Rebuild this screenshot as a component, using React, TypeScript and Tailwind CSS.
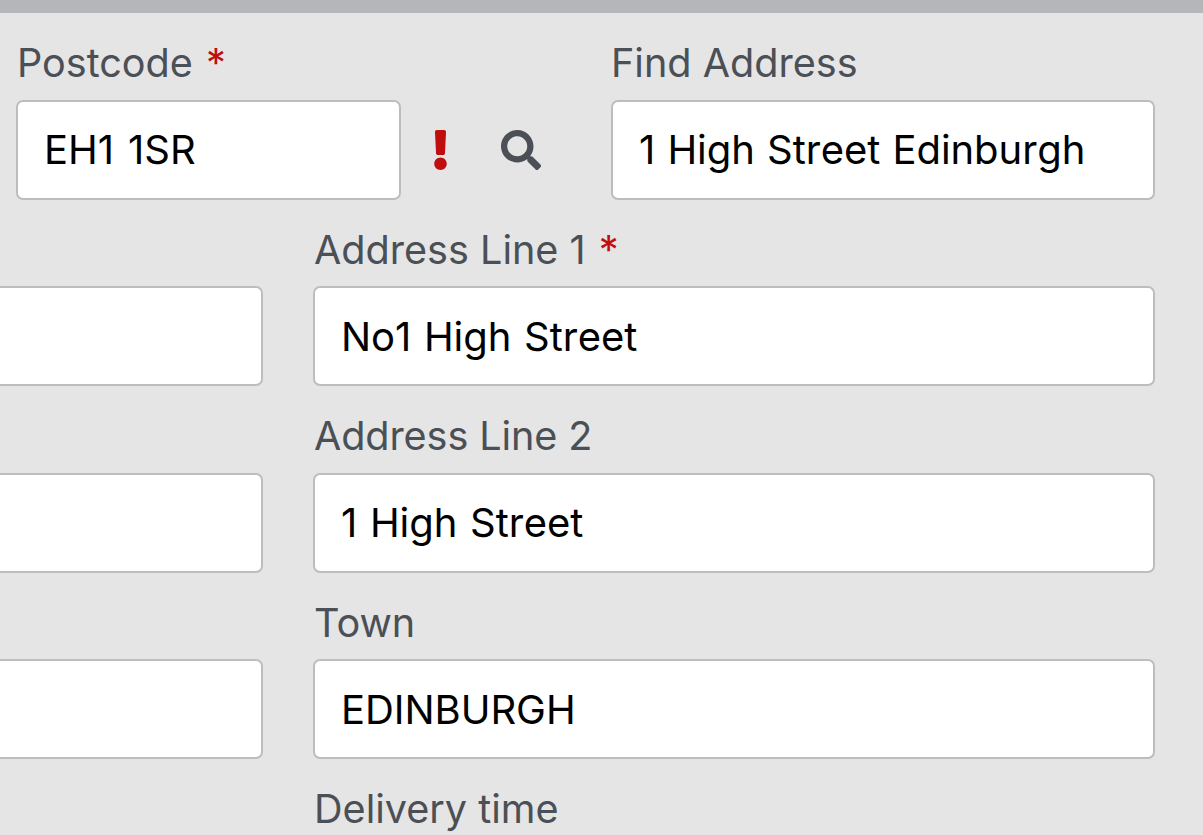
import React from "react";
import { FaExclamation, FaSearch } from "react-icons/fa";

function Star() {
  return <span className="text-[#c00d0d] ml-[13px]">*</span>;
}

function Label({ children, className = "mb-[14px]" }: { children: React.ReactNode; className?: string }) {
  return <div className={`text-[39.6px] leading-[46px] text-[#4b4f56] h-[46px] whitespace-nowrap ${className}`}>{children}</div>;
}

function Field({ value, className = "" }: { value?: string; className?: string }) {
  return (
    <div className={`h-[100px] bg-white border-2 border-[#bdbdbd] rounded-[7px] flex items-center pl-[26px] text-[40px] text-black whitespace-nowrap [font-kerning:none] tracking-[-0.05px] ${className}`}>
      {value}
    </div>
  );
}

function Row({ label, value, req, spacing }: { label: string; value: string; req?: boolean; spacing: string }) {
  return (
    <div className="flex gap-[50px] pt-[27px]">
      <div className="w-[263px] pt-[59px]">
        <Field className="rounded-l-none border-l-0" />
      </div>
      <div className="w-[842px]">
        <Label className="mb-[13px] pl-[1px]">
          {label}
          {req && <Star />}
        </Label>
        <Field value={value} className={`pt-[2px] ${spacing}`} />
      </div>
    </div>
  );
}

export default function App() {
  return (
    <div className="w-[1203px] h-[835px] overflow-hidden bg-[#e5e5e5]" style={{ fontFamily: "Inter, sans-serif" }}>
      <div className="h-[13px] bg-[#b5b6ba]" />
      <div className="pl-[16px] pt-[27px] flex">
        <div className="w-[385px]">
          <Label>
            <span className="ml-[1px]">Postcode</span>
            <Star />
          </Label>
          <Field value="EH1 1SR" className="[word-spacing:3px]" />
        </div>
        <div className="w-[210px] h-[100px] mt-[60px] flex items-center">
          <FaExclamation className="ml-[32px] w-[15px] h-[40px] text-[#c00d0d]" />
          <FaSearch className="ml-[53px] w-[40px] h-[40px] text-[#4b4f56]" />
        </div>
        <div className="w-[544px]">
          <Label>Find Address</Label>
          <Field value="1 High Street Edinburgh" className="[word-spacing:1px]" />
        </div>
      </div>
      <Row label="Address Line 1" value="No1 High Street" req spacing="[word-spacing:1.5px]" />
      <div className="flex gap-[50px] pt-[27px]">
        <div className="w-[263px] pt-[60px]">
          <Field className="rounded-l-none border-l-0" />
        </div>
        <div className="w-[842px]">
          <Label className="mb-[14px] pl-[1px] tracking-[-0.1px]">Address Line 2</Label>
          <Field value="1 High Street" className="[word-spacing:1.5px]" />
        </div>
      </div>
      <Row label="Town" value="EDINBURGH" spacing="" />
      <div className="ml-[314px] pt-[27px]">
        <Label>Delivery time</Label>
      </div>
    </div>
  );
}
